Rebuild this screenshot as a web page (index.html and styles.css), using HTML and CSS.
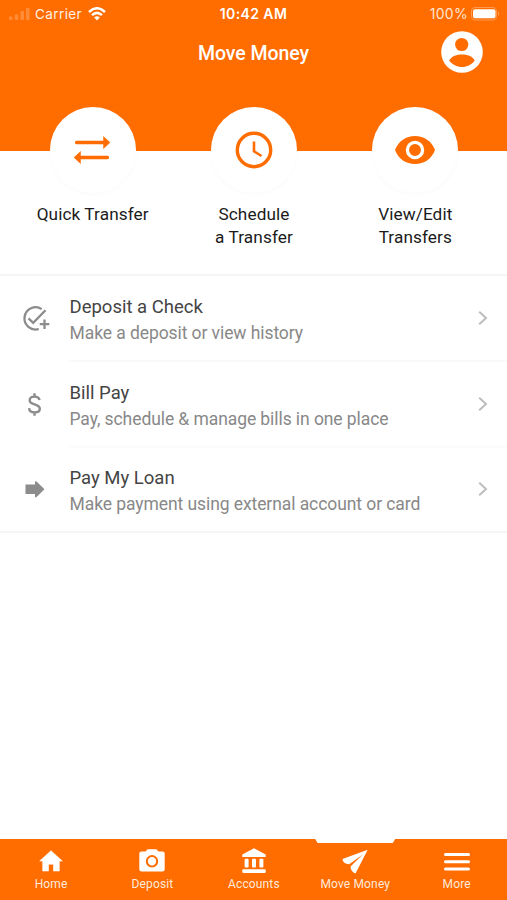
FILE: index.html
```html
<!DOCTYPE html>
<html lang="en">
<head>
<meta charset="utf-8">
<title>Move Money</title>
<link rel="stylesheet" href="styles.css">
</head>
<body>
<div class="screen">
  <header class="header">
    <div class="status">
      <div class="status-left">
        <svg class="signal" width="22" height="14" viewBox="0 0 22 14"><rect x="1" y="9.500" width="3.500" height="3.500" rx="1"/><rect x="6.800" y="7.500" width="3.500" height="5.500" rx="1"/><rect x="12.500" y="4" width="3.500" height="9" rx="1"/><rect x="18" y="1" width="3.500" height="12" rx="1"/></svg>
        <span class="carrier">Carrier</span>
        <svg class="wifi" width="18" height="14" viewBox="0 0 18 14"><path d="M1 5Q9-2.500 17 5M4 8.100Q9 3.600 14 8.100" fill="none" stroke="#fff" stroke-width="2.500"/><path d="M6.200 10.400Q9 8 11.800 10.400L9 13.400Z" fill="#fff"/></svg>
      </div>
      <span class="time">10:42 AM</span>
      <div class="status-right">
        <span class="percent">100%</span>
        <svg width="29" height="14" viewBox="0 0 29 14"><rect x="0.500" y="0.500" width="25" height="12.500" rx="3.500" fill="none" stroke="#ff9c52"/><rect x="2" y="2.200" width="22.500" height="9" rx="2" fill="#fff"/><path d="M27 4.500Q29.500 6.500 27 9Z" fill="#ff9c52"/></svg>
      </div>
    </div>
    <div class="titlebar">
      <h1>Move Money</h1>
      <svg class="avatar" width="42" height="42" viewBox="0 0 42 42"><circle cx="21" cy="21" r="20.800" fill="#fff"/><circle cx="20.700" cy="13.500" r="6.600" fill="#ff6c00"/><path d="M8.200 29.500C10.500 25 16 23.500 21 23.500S31.500 25 33.700 29.500C31 33.500 26 36 21 36S11 33.500 8.200 29.500Z" fill="#ff6c00"/></svg>
    </div>
  </header>
  <section class="actions">
    <div class="action">
      <div class="disc"><svg width="38" height="30" viewBox="0 0 38 30"><path d="M2.500 7.500H30M6 22.500H33.500" fill="none" stroke="#ff6c00" stroke-width="3.300" stroke-linecap="round"/><path d="M29.500 1.500L36 7.500L29.500 13.500ZM6.500 16.500L0 22.500L6.500 28.500Z" fill="#ff6c00" stroke="#ff6c00" stroke-width=".5" stroke-linejoin="round"/></svg></div>
      <span>Quick Transfer</span>
    </div>
    <div class="action">
      <div class="disc"><svg width="38" height="38" viewBox="0 0 38 38"><circle cx="19" cy="19" r="16.700" fill="none" stroke="#ff6c00" stroke-width="3.400"/><path d="M19 10.500V20.300L26.500 25" fill="none" stroke="#ff6c00" stroke-width="2.600"/></svg></div>
      <span>Schedule<br>a Transfer</span>
    </div>
    <div class="action">
      <div class="disc"><svg width="40" height="28" viewBox="0 0 40 28"><path d="M0 14C3.500 5 11 0 20 0S36.500 5 40 14C36.500 23 29 28 20 28S3.500 23 0 14Z" fill="#ff6c00"/><circle cx="20" cy="14" r="7.600" fill="#ff6c00" stroke="#fff" stroke-width="3.300"/></svg></div>
      <span>View/Edit<br>Transfers</span>
    </div>
  </section>
  <main class="list">
    <div class="row">
      <svg class="row-icon" width="30" height="30" viewBox="0 0 30 30"><path d="M20.700 5.100A11.100 11.100 0 1 0 17.800 25M7.500 14.300L12.200 18.800L24.500 6.300M23.500 15.500V25M18.700 20.200H28.300" fill="none" stroke="#8c8c8c" stroke-width="2.300"/></svg>
      <div class="row-body"><div class="row-text"><h2>Deposit a Check</h2><p>Make a deposit or view history</p></div>
      <svg class="chevron" width="10" height="16" viewBox="0 0 10 16"><path d="M1.200 1.700L8 8L1.200 14.300" fill="none" stroke="#bdbdbd" stroke-width="2"/></svg></div>
    </div>
    <div class="row">
      <svg class="row-icon" width="30" height="30" viewBox="0 0 30 30"><path d="M18.500 10.200C18.200 7.800 16.500 6.600 13.500 6.600C10.500 6.600 8.700 8 8.700 10.200C8.700 12.500 10.500 13.500 13.500 14.300C17 15.200 18.800 16.500 18.800 18.800C18.800 21.200 16.800 22.500 13.700 22.500C10.500 22.500 8.300 21 8.100 18.200M13.500 3.300V6.500M13.500 22.500V25.700" fill="none" stroke="#8c8c8c" stroke-width="2.400"/></svg>
      <div class="row-body"><div class="row-text"><h2>Bill Pay</h2><p>Pay, schedule &amp; manage bills in one place</p></div>
      <svg class="chevron" width="10" height="16" viewBox="0 0 10 16"><path d="M1.200 1.700L8 8L1.200 14.300" fill="none" stroke="#bdbdbd" stroke-width="2"/></svg></div>
    </div>
    <div class="row">
      <svg class="row-icon" width="30" height="30" viewBox="0 0 30 30"><path d="M4.500 10.600H14V7.600Q14.500 6.800 15.500 7.600L23 14.800Q23.500 15.300 23 15.800L15.500 23Q14.500 23.800 14 23V20H4.500Z" fill="#8c8c8c"/></svg>
      <div class="row-body"><div class="row-text"><h2>Pay My Loan</h2><p>Make payment using external account or card</p></div>
      <svg class="chevron" width="10" height="16" viewBox="0 0 10 16"><path d="M1.200 1.700L8 8L1.200 14.300" fill="none" stroke="#bdbdbd" stroke-width="2"/></svg></div>
    </div>
  </main>
  <nav class="tabs">
    <div class="tab"><svg width="28" height="28" viewBox="0 0 28 28"><path d="M14 3.700L25.300 14H22.300V24H16.500V17.200H11.500V24H5.700V14H2.700Z" fill="#fff" stroke="#fff" stroke-width=".6" stroke-linejoin="round"/></svg><span>Home</span></div>
    <div class="tab"><svg width="28" height="28" viewBox="0 0 28 28"><path d="M9.500 2.200H18.500L20.500 4.400H24.500Q26.700 4.400 26.700 6.600V22.200Q26.700 24.400 24.500 24.400H3.500Q1.300 24.400 1.300 22.200V6.600Q1.300 4.400 3.500 4.400H7.500Z" fill="#fff"/><circle cx="14" cy="14.300" r="5.200" fill="none" stroke="#ff6c00" stroke-width="2"/></svg><span>Deposit</span></div>
    <div class="tab"><svg width="28" height="28" viewBox="0 0 28 28"><path d="M14 1.300L25.700 7.500V10H2.300V7.500Z" fill="#fff"/><g fill="#fff"><rect x="4.600" y="11.700" width="4" height="8.800" rx="1"/><rect x="12" y="11.700" width="4" height="8.800" rx="1"/><rect x="19.400" y="11.700" width="4" height="8.800" rx="1"/><rect x="2.300" y="22.300" width="23.400" height="3.700" rx="1"/></g></svg><span>Accounts</span></div>
    <div class="tab active"><svg width="28" height="28" viewBox="0 0 28 28"><path d="M26.700 2.800L1.500 12Q1.800 16.800 8.200 17.200L21.800 7.400L9.500 19.500Q10 25 14.500 26.500Z" fill="#fff"/></svg><span>Move Money</span></div>
    <div class="tab"><svg width="28" height="28" viewBox="0 0 28 28"><path d="M2.500 7.500H25.500M2.500 14.700H25.500M2.500 21.900H25.500" fill="none" stroke="#fff" stroke-width="3" stroke-linecap="round"/></svg><span>More</span></div>
  </nav>
</div>
</body>
</html>
```
FILE: styles.css
```css
* { box-sizing: border-box; }
body { margin: 0; background: #fff; font-family: Roboto, sans-serif; }
h1, h2, p { margin: 0; font-weight: 400; }
svg { display: block; flex: none; }
.screen { width: 507px; height: 900px; display: flex; flex-direction: column; overflow: hidden; }

.header { height: 151px; background: #ff6c00; color: #fff; flex: none; }
.status { height: 27px; display: grid; grid-template-columns: 1fr auto 1fr; align-items: center; font-family: Inter, sans-serif; }
.status-left { display: flex; align-items: center; padding-left: 8px; }
.signal { fill: #ff8d38; }
.carrier { margin: 0 6px 0 5px; font-size: 13.5px; letter-spacing: .4px; color: #fff0e4; }
.time { font-size: 14px; font-weight: 600; letter-spacing: .4px; }
.status-right { display: flex; align-items: center; justify-content: flex-end; gap: 3px; padding-right: 7px; font-size: 14px; letter-spacing: .3px; color: #ffe5d1; }
.titlebar { display: grid; grid-template-columns: 1fr auto 1fr; align-items: center; height: 50px; }
.titlebar h1 { grid-column: 2; padding-top: 2px; font-size: 19.500px; font-weight: 500; letter-spacing: -.05px; }
.avatar { justify-self: end; margin-right: 24px; }

.actions { height: 125px; flex: none; display: grid; grid-template-columns: repeat(3, 161.300px); justify-content: center; padding-left: 1px; border-bottom: 2px solid #f5f5f5; }
.action { display: flex; flex-direction: column; align-items: center; margin-top: -44px; text-align: center; color: #1b1b1b; font-size: 17.200px; line-height: 22.500px; letter-spacing: .1px; }
.disc { width: 86px; height: 86px; margin-bottom: 10px; border-radius: 50%; background: #fff; display: flex; align-items: center; justify-content: center; box-shadow: 0 2px 4px rgba(0, 0, 0, .02); }

.list { flex: 1; color: #888; padding-top: .5px; }
.row { height: 85.500px; display: flex; align-items: center; padding-left: 21px; }
.row-body { height: 100%; flex: 1; margin-left: 18px; display: flex; align-items: center; justify-content: space-between; padding-right: 19px; border-bottom: 2px solid #f9f9f9; }
.row:nth-child(2) .row-body { border-bottom-color: #fcfcfc; }
.row:last-child { border-bottom: 2px solid #f5f5f5; }
.row:last-child .row-body { border-bottom: 0; }
.row-text { line-height: 26px; font-size: 17.500px; padding-top: 4px; }
.row-text h2 { padding-left: .5px; font-size: 18.500px; letter-spacing: 0; color: #444; }
.row-text p { padding-left: .5px; letter-spacing: -.08px; white-space: nowrap; }

.tabs { height: 61px; flex: none; display: grid; grid-template-columns: repeat(5, 1fr); background: #ff6c00; color: #ffeadb; }
.tab { position: relative; display: flex; flex-direction: column; align-items: center; padding: 8px 0 0 .8px; font-size: 12px; line-height: 19px; letter-spacing: .15px; }
.active::before { content: ""; position: absolute; top: 0; left: 11px; width: 80px; height: 4px; background: #fff; clip-path: polygon(0 0, 100% 0, 97% 100%, 3% 100%); }
```
